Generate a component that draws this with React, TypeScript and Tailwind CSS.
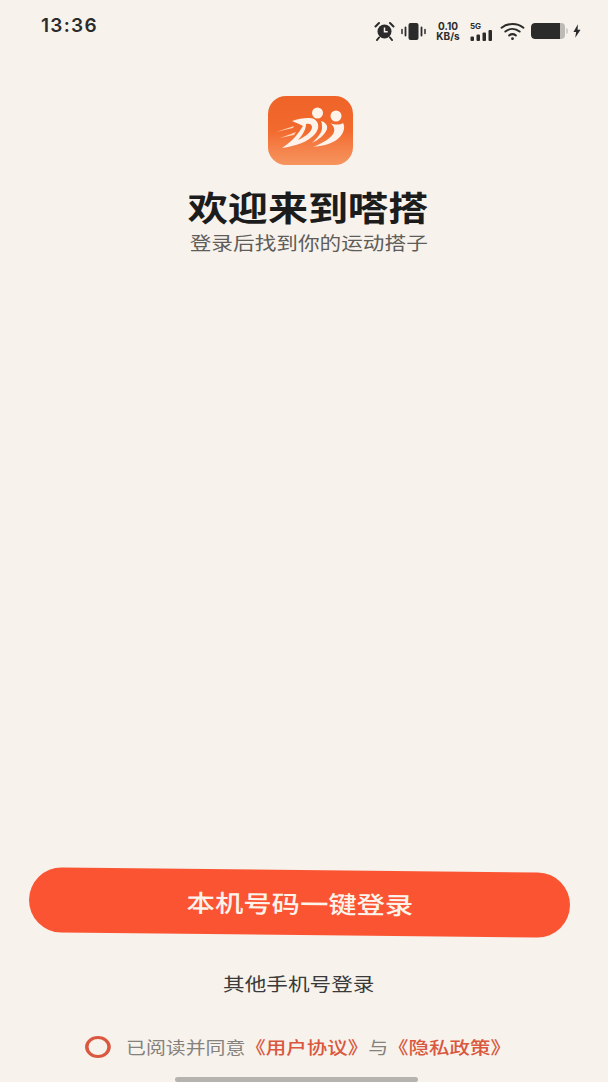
import React from 'react'

function AlarmIcon() {
  return (
    <svg width="21" height="20" viewBox="0 0 21 20" className="text-[#2b2b2b]">
      <circle cx="10.500" cy="10.500" r="7" fill="currentColor" />
      <path d="M10.500 6.500v4.200h3.200" fill="none" stroke="#f7f2ec" strokeWidth="1.500" />
      <path d="M1.500 5.500 5 2M19.500 5.500 16 2M5 16.500l-2 2.500M16 16.500l2 2.500" stroke="currentColor" strokeWidth="2" strokeLinecap="round" />
    </svg>
  )
}

function VibrateIcon() {
  return (
    <svg width="25" height="17" viewBox="0 0 25 17" className="text-[#2b2b2b]">
      <rect x="7.500" y="0" width="10" height="17" rx="2" fill="currentColor" />
      <path d="M4.500 4.500v8M20.500 4.500v8" stroke="currentColor" strokeWidth="1.800" strokeLinecap="round" />
      <path d="M1 6.500v4M24 6.500v4" stroke="currentColor" strokeWidth="1.500" strokeLinecap="round" />
    </svg>
  )
}

function SignalIcon() {
  return (
    <svg width="24" height="11" viewBox="0 0 24 11" className="text-[#2b2b2b]">
      <rect x="0.500" y="6.500" width="3.500" height="4.500" rx="1" fill="currentColor" />
      <rect x="6.500" y="4.500" width="3.500" height="6.500" rx="1" fill="currentColor" />
      <rect x="12.500" y="2.500" width="3.500" height="8.500" rx="1" fill="currentColor" />
      <rect x="18.500" y="0" width="3.500" height="11" rx="1" fill="currentColor" />
    </svg>
  )
}

function WifiIcon() {
  return (
    <svg width="25" height="19" viewBox="0 0 26 20" fill="none" stroke="#2b2b2b" strokeLinecap="round">
      <path d="M1.500 6C8 .8 18 .8 24.500 6" strokeWidth="2.200" />
      <path d="M5.500 10c4.500-3.500 10.500-3.500 15 0" strokeWidth="2.200" />
      <path d="M9.500 14c2.200-1.500 4.800-1.500 7 0" strokeWidth="2.200" />
      <circle cx="13" cy="17.500" r="1.500" fill="#2b2b2b" stroke="none" />
    </svg>
  )
}

function BatteryIcon() {
  return (
    <div className="flex items-center">
      <div className="flex h-[16px] w-[34px] overflow-hidden rounded-[4px] bg-[#bdbab5]">
        <div className="h-full w-[29px] rounded-l-[4px] bg-[#2b2b2b]" />
      </div>
      <div className="ml-px h-[6px] w-[2px] rounded-r-sm bg-[#d2cfca]" />
    </div>
  )
}

function Bolt() {
  return (
    <svg width="8" height="14" viewBox="0 0 9 15">
      <path d="M5.500 0 .5 8.500h3L2.500 15l6-9H5.200z" fill="#2b2b2b" />
    </svg>
  )
}

function Logo() {
  return (
    <div className="h-[69px] w-[85px] overflow-hidden rounded-[18px] bg-gradient-to-b from-[#ef6327] via-[#f26a2e] to-[#f6955f]">
      <svg width="85" height="69" viewBox="0 0 85 69">
        <circle cx="49.500" cy="17" r="5.500" fill="#fdf3ea" />
        <circle cx="68" cy="20" r="5.500" fill="#fdf3ea" />
        {/* the D */}
        <path
          fillRule="evenodd"
          fill="#fdf3ea"
          d="M24 25C32 22 42 21 46 23C51 26 52 32 47 38C40 46 28 50 14 52C20 48 26 43 31 36L35 30C32 28 28 27 24 25ZM38 28C41 27 44 28 44 31C44 35 39 40 30 44C35 39 38 33 38 28Z"
        />
        {/* first hook */}
        <path fill="#fdf3ea" d="M53 25C57 26 60 29 59 33C57 39 50 44 44 47C49 42 54 37 54 32C54 29 54 27 53 25Z" />
        {/* second hook */}
        <path fill="#fdf3ea" d="M62 27C67 29 72 29 75 27C78 32 75 40 67 45C60 49 52 50 45 51C55 47 64 42 66 36C67 32 65 29 62 27Z" />
        {/* speed lines */}
        <path d="M8 36 26 30 25 32ZM12 42 28 36 26 39Z" fill="#fbd3b6" />
      </svg>
    </div>
  )
}

export default function App() {
  return (
    <div className="flex h-[1082px] w-[608px] flex-col items-center overflow-hidden bg-[#f7f2ec] font-['Noto_Sans_CJK_SC',sans-serif]">
      {/* Status bar */}
      <div className="flex w-full items-start justify-between pl-[41px] pr-[27px] pt-[15px]">
        <span className="font-['Inter',sans-serif] text-[19px] font-semibold leading-[22px] tracking-[1.300px] text-[#2b2b2b]">13:36</span>
        <div className="flex items-center pt-[6px]">
          <AlarmIcon />
          <div className="ml-[6px]">
            <VibrateIcon />
          </div>
          <div className="ml-[10px] flex w-[24px] flex-col items-center font-['Inter',sans-serif] text-[10px] font-bold leading-[10px] text-[#2b2b2b]">
            <span>0.10</span>
            <span>KB/s</span>
          </div>
          <div className="ml-[10px] flex flex-col items-start">
            <span className="font-['Inter',sans-serif] text-[8px] font-bold leading-[8px] text-[#2b2b2b]">5G</span>
            <SignalIcon />
          </div>
          <div className="ml-[6px]">
            <WifiIcon />
          </div>
          <div className="ml-[6px]">
            <BatteryIcon />
          </div>
          <div className="ml-[5px]">
            <Bolt />
          </div>
        </div>
      </div>

      {/* Welcome */}
      <div className="ml-[12px] mt-[55px]">
        <Logo />
      </div>
      <h1 className="ml-[8px] mt-[20px] scale-x-[1.18] text-[34px] font-bold leading-[44px] text-[#1c1c1c]">欢迎来到嗒搭</h1>
      <p className="ml-[9px] scale-x-[1.17] text-[18.500px] leading-[26px] text-[#5f5d5a]">登录后找到你的运动搭子</p>

      {/* Actions */}
      <div className="mt-auto flex w-full flex-col items-center">
        <button className="mr-[10px] h-[65px] w-[541px] rotate-[0.6deg] rounded-full bg-[#fb5433] text-[#fdf3ea]">
          <span className="inline-block scale-x-[1.18] text-[24px] font-medium">本机号码一键登录</span>
        </button>
        <span className="mr-[11px] mt-[35px] scale-x-[1.17] text-[18.500px] leading-[26px] text-[#3a3a3a]">其他手机号登录</span>
        <div className="mr-[13px] mt-[39px] flex scale-x-[1.17] items-center">
          <div className="mr-[13px] size-[22px] rounded-full border-[3px] border-[#d9583f]" />
          <span className="text-[17px] leading-[24px] text-[#85827e]">已阅读并同意</span>
          <span className="text-[17.500px] font-medium leading-[24px] text-[#d9583f]">《用户协议》</span>
          <span className="text-[17px] leading-[24px] text-[#85827e]">与</span>
          <span className="text-[17.500px] font-medium leading-[24px] text-[#d9583f]">《隐私政策》</span>
        </div>
        <div className="mr-[16px] mt-[18px] h-[5px] w-[243px] rounded-full bg-[#b5b3af]" />
      </div>
    </div>
  )
}
